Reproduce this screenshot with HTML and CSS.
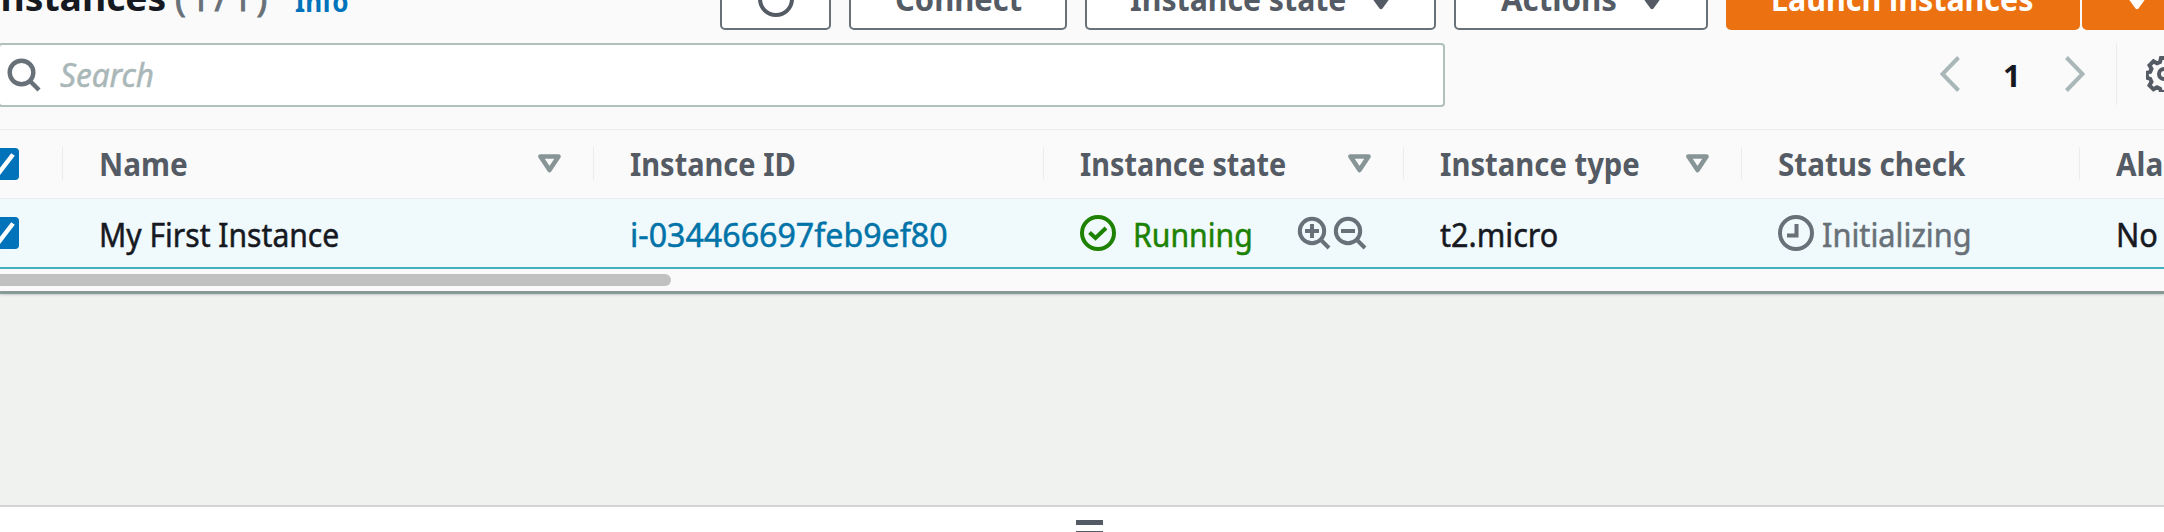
FILE: index.html
```html
<!DOCTYPE html>
<html lang="en">
<head>
<meta charset="utf-8">
<title>Instances</title>
<link rel="stylesheet" href="styles.css">
</head>
<body>
<main class="page">
  <section class="card">
    <header class="toolbar">
      <h1 class="title"><span class="label t-title">Instances</span><span class="label t-count">(1/1)</span><a class="label t-info">Info</a></h1>
      <div class="actions">
        <button class="btn btn-refresh"><svg class="refresh" viewBox="0 0 36 36"><circle cx="18" cy="18" r="16"/></svg></button>
        <button class="btn btn-connect"><span class="label t-connect">Connect</span></button>
        <button class="btn btn-state"><span class="label t-bstate">Instance state</span><svg class="caret" viewBox="0 0 24 24"><path d="M0 7H24L13.500 21.500Q12 23 10.500 21.500Z"/></svg></button>
        <button class="btn btn-actions"><span class="label t-actions">Actions</span><svg class="caret" viewBox="0 0 24 24"><path d="M0 7H24L13.500 21.500Q12 23 10.500 21.500Z"/></svg></button>
        <div class="split">
          <button class="btn primary btn-launch"><span class="label t-launch">Launch instances</span></button>
          <button class="btn primary btn-more"><svg class="caret" viewBox="0 0 24 24"><path d="M0 7H24L13.500 21.500Q12 23 10.500 21.500Z"/></svg></button>
        </div>
      </div>
    </header>
    <div class="filters">
      <div class="search"><svg class="icon-search" viewBox="0 0 34 34"><circle cx="14.500" cy="14.500" r="11.800"/><path d="M22.500 22.500L32 32"/></svg><span class="label t-search">Search</span></div>
      <nav class="pager">
        <svg class="chev" viewBox="0 0 20 36"><path d="M18.500 1.500L2.500 18L18.500 34.500"/></svg>
        <span class="label t-page">1</span>
        <svg class="chev" viewBox="0 0 20 36"><path d="M1.500 1.500L17.500 18L1.500 34.500"/></svg>
        <span class="rule"></span>
        <svg class="gear" viewBox="0 0 36 36"><path d="M15 2h6l1 4 3 1.300 3.500-2 4 4-2 3.500 1.300 3 3.200 1v5l-3.200 1-1.300 3 2 3.500-4 4-3.500-2-3 1.300-1 3.400h-6l-1-3.400-3-1.300-3.500 2-4-4 2-3.500-1.300-3-3.200-1v-5l3.200-1 1.300-3-2-3.500 4-4 3.500 2 3-1.300z"/><circle cx="18" cy="18" r="5"/></svg>
      </nav>
    </div>
    <div class="row head">
      <div class="pick"><span class="check"><svg viewBox="0 0 32 32"><path d="M5 16L12.500 24L26 6.500"/></svg></span></div>
      <div class="cell"><span class="label t-name">Name</span><svg class="sort" viewBox="0 0 23 19"><path d="M2.500 2.500H20.500L11.500 16Z"/></svg></div>
      <div class="cell"><span class="label t-id">Instance ID</span></div>
      <div class="cell"><span class="label t-state">Instance state</span><svg class="sort" viewBox="0 0 23 19"><path d="M2.500 2.500H20.500L11.500 16Z"/></svg></div>
      <div class="cell"><span class="label t-type">Instance type</span><svg class="sort" viewBox="0 0 23 19"><path d="M2.500 2.500H20.500L11.500 16Z"/></svg></div>
      <div class="cell"><span class="label t-status">Status check</span></div>
      <div class="cell"><span class="label t-alarm">Alarm status</span></div>
    </div>
    <div class="row item">
      <div class="pick"><span class="check"><svg viewBox="0 0 32 32"><path d="M5 16L12.500 24L26 6.500"/></svg></span></div>
      <div class="cell"><span class="label v-name">My First Instance</span></div>
      <div class="cell"><a class="label v-id">i-034466697feb9ef80</a></div>
      <div class="cell state"><svg class="status ok" viewBox="0 0 36 36"><circle cx="18" cy="18" r="16"/><path d="M9.500 17.500L15.500 23L26 13"/></svg><span class="label v-run">Running</span><svg class="mag" viewBox="0 0 34 34"><circle cx="15" cy="15" r="12.200"/><path d="M23.500 23.500L32 32M8 15H22M15 8V22"/></svg><svg class="mag" viewBox="0 0 34 34"><circle cx="15" cy="15" r="12.200"/><path d="M23.500 23.500L32 32M8 15H22"/></svg></div>
      <div class="cell"><span class="label v-type">t2.micro</span></div>
      <div class="cell"><svg class="status wait" viewBox="0 0 36 36"><circle cx="18" cy="18" r="16"/><path d="M18.500 9V20.500H9"/></svg><span class="label v-init">Initializing</span></div>
      <div class="cell"><span class="label v-alarm">No alarms</span></div>
    </div>
    <div class="scroll"><span class="thumb"></span></div>
  </section>
  <section class="panel"><span class="grip"></span></section>
</main>
</body>
</html>
```
FILE: styles.css
```css
* { box-sizing: border-box; }
body {
  margin: 0;
  width: 2164px;
  height: 532px;
  overflow: hidden;
  font: 32px/40px "Noto Sans", sans-serif;
  color: #16191f;
  background: #f0f2ef;
}
svg { display: block; flex: none; fill: none; }
.page { display: flex; flex-direction: column; justify-content: space-between; height: 532px; }
.card {
  height: 294px;
  overflow: hidden;
  background: #fafafa;
  border-bottom: 3px solid #879a96;
  box-shadow: 0 1px 2px #c3cbcb;
}

/* Labels are narrowed horizontally; width is the space each takes in its row. */
.label { display: block; flex: none; white-space: nowrap; text-align: left; transform-origin: 0 50%; }

.toolbar { display: flex; height: 43px; }
.title { display: flex; flex: none; width: 734px; height: 40px; margin: -22px 0 0 -14px; font-size: 36px; }
.t-title { width: 189px; transform: scaleX(1.035); }
.t-count { width: 120px; color: #687078; font-weight: 400; letter-spacing: 4px; -webkit-text-stroke: .8px #687078; }
.t-info { margin-top: 3px; color: #0073bb; font-size: 28px; transform: scaleX(.93); }

.actions { display: flex; flex: none; gap: 18px; height: 62px; margin-top: -32px; }
.btn {
  display: flex;
  flex: none;
  align-items: center;
  height: 62px;
  margin: 0;
  padding: 0;
  border: 2px solid #687078;
  border-radius: 5px;
  background: #fff;
  color: #545b64;
  font: 700 32px/40px "Noto Sans", sans-serif;
}
.btn-refresh { width: 111px; justify-content: center; }
.refresh { width: 36px; height: 36px; stroke: #545b64; stroke-width: 4; }
.btn-connect { width: 218px; padding-left: 44px; }
.btn-state { width: 351px; padding-left: 43px; }
.btn-actions { width: 254px; padding-left: 45px; }
.t-connect { transform: scaleX(.965); }
.t-bstate { width: 239px; transform: scaleX(.944); }
.t-actions { width: 139px; transform: scaleX(.975); }
.caret { width: 24px; height: 24px; fill: currentColor; }
.split { display: flex; flex: none; gap: 2px; }
.primary { border-color: #ec7211; background: #ec7211; color: #fff; }
.btn-launch { width: 354px; padding-left: 43px; }
.btn-more { width: 112px; padding-left: 41px; }
.t-launch { transform: scaleX(.95); }

.filters { display: flex; height: 86px; }
.search {
  display: flex;
  flex: none;
  align-items: center;
  width: 1447px;
  height: 64px;
  margin-left: -2px;
  padding-left: 7px;
  border: 2px solid #b1bfbd;
  border-radius: 4px;
  background: #fff;
}
.icon-search { width: 34px; height: 34px; stroke: #687078; stroke-width: 4.4; }
.t-search { margin-left: 19px; color: #aab7b8; font-style: italic; transform: scaleX(.985); -webkit-text-stroke: .5px #aab7b8; }
.pager { display: flex; flex: none; align-items: center; height: 62px; margin-left: 495px; }
.chev { width: 20px; height: 36px; stroke: #aab7b8; stroke-width: 4; }
.t-page { width: 62px; margin: 2px 0 0 43px; font-size: 31px; font-weight: 700; }
.rule { flex: none; width: 1px; height: 62px; margin: 0 29px 0 31px; background: #eaeded; }
.gear { width: 36px; height: 36px; stroke: #545b64; stroke-width: 4; }

.row { display: grid; grid-template-columns: 62px 531px 450px 360px 338px 338px 200px; }
.pick { display: flex; align-items: center; }
.check { flex: none; width: 32px; height: 32px; margin-left: -13px; border-radius: 4px; background: #0073bb; }
.check svg { width: 32px; height: 32px; stroke: #fff; stroke-width: 4.5; }
.cell { display: flex; align-items: center; padding: 0 32px 0 37px; }
.head {
  height: 70px;
  border-top: 1px solid #eaeded;
  border-bottom: 1px solid #eaeded;
  color: #545b64;
  font-weight: 700;
}
.head .cell {
  padding-bottom: 1px;
  background: linear-gradient(#eaeded, #eaeded) 0 17px / 1px 33px no-repeat;
}
.sort { width: 23px; height: 19px; margin: 0 0 0 auto; stroke: #879596; stroke-width: 4.6; stroke-linejoin: round; }
.t-name { width: 90px; transform: scaleX(.93); }
.t-id { width: 167px; transform: scaleX(.905); }
.t-state { width: 208px; transform: scaleX(.9); }
.t-type { width: 200px; transform: scaleX(.914); }
.t-status { width: 190px; transform: scaleX(.925); }
.t-alarm { transform: scaleX(.93); }
.item { height: 70px; border-bottom: 2px solid #42b0bf; background: #f0f9fc; -webkit-text-stroke: .5px currentColor; }
.item .label { margin-top: 3px; }
.v-name { transform: scaleX(.94); }
.v-id { color: #0073a8; transform: scaleX(1.005); }
.status { width: 36px; height: 36px; stroke-width: 4; }
.ok { stroke: #1d8102; }
.wait { stroke: #687078; }
.v-run { width: 164px; margin-left: 17px; color: #1d8102; transform: scaleX(.943); }
.mag { width: 34px; height: 34px; margin-right: 2px; stroke: #687078; stroke-width: 4; }
.v-type { transform: scaleX(.955); }
.v-init { margin-left: 8px; color: #687078; transform: scaleX(.96); }
.v-alarm { transform: scaleX(.96); }

.scroll { padding-top: 5px; }
.thumb { display: block; width: 671px; height: 12px; border-radius: 0 6px 6px 0; background: #c1c1c1; }

.panel { height: 27px; padding-top: 13px; border-top: 2px solid #d3d5d3; background: #fff; }
.grip { display: block; width: 27px; height: 16px; margin-left: 1076px; border-top: 5px solid #545b64; border-bottom: 5px solid #545b64; }
```
